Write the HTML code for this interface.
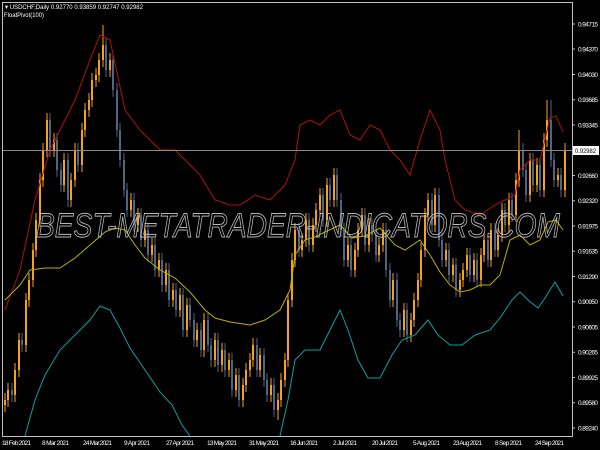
<!DOCTYPE html>
<html><head><meta charset="utf-8"><style>
html,body{margin:0;padding:0;background:#000;width:600px;height:450px;overflow:hidden}
svg{display:block}
text{font-family:"Liberation Sans",sans-serif}
</style></head><body>
<svg width="600" height="450" xmlns="http://www.w3.org/2000/svg">
<rect width="600" height="450" fill="#000"/>
<g fill="none">
<path stroke="#f5a21a" stroke-width="1" d="M5 393V412M8 383V407M15 363V402M19 333V377M26 293V352M29 273V307M33 243V287M36 213V257M40 173V227M43 143V187M47 113V157M54 133V157M64 153V192M71 173V207M75 143V187M82 123V172M85 103V137M89 93V117M92 73V107M96 68V87M99 53V82M103 25V67M110 53V77M131 193V217M138 208V232M145 223V247M152 238V262M159 253V277M166 263V292M173 283V307M180 288V317M187 298V337M197 323V347M204 313V357M215 333V367M222 343V372M229 353V377M236 368V397M243 378V407M246 363V392M250 353V377M253 338V367M260 348V377M271 378V402M278 393V420M281 373V407M285 353V387M288 293V367M292 253V307M295 223V267M302 233V257M306 213V247M313 218V252M316 203V232M320 188V217M327 178V227M334 168V207M348 238V267M355 243V277M358 223V257M362 208V237M369 218V252M379 238V262M383 223V252M393 273V307M404 303V337M411 313V342M414 293V327M418 273V307M421 243V287M425 208V257M428 193V222M435 188V232M446 243V267M453 258V282M460 273V297M463 263V287M467 248V277M474 253V282M481 248V287M484 233V262M491 223V267M498 228V257M502 203V242M509 193V232M516 173V222M519 130V187M530 153V202M537 158V192M544 133V197M547 100V147M558 168V187M565 143V197"/>
<path stroke="#f5a21a" stroke-width="2" d="M5 400V405M8 390V400M15 370V395M19 340V370M26 300V345M29 280V300M33 250V280M36 220V250M40 180V220M43 150V180M47 120V150M54 140V150M64 160V185M71 180V200M75 150V180M82 130V165M85 110V130M89 100V110M92 80V100M96 75V80M99 60V75M103 45V60M110 60V70M131 200V210M138 215V225M145 230V240M152 245V255M159 260V270M166 270V285M173 290V300M180 295V310M187 305V330M197 330V340M204 320V350M215 340V360M222 350V365M229 360V370M236 375V390M243 385V400M246 370V385M250 360V370M253 345V360M260 355V370M271 385V395M278 400V410M281 380V400M285 360V380M288 300V360M292 260V300M295 230V260M302 240V250M306 220V240M313 225V245M316 210V225M320 195V210M327 185V220M334 175V200M348 245V260M355 250V270M358 230V250M362 215V230M369 225V245M379 245V255M383 230V245M393 280V300M404 310V330M411 320V335M414 300V320M418 280V300M421 250V280M425 215V250M428 200V215M435 195V225M446 250V260M453 265V275M460 280V290M463 270V280M467 255V270M474 260V275M481 255V280M484 240V255M491 230V260M498 235V250M502 210V235M509 200V225M516 180V215M519 150V180M530 160V195M537 165V185M544 140V190M547 120V140M558 175V180M565 150V190"/>
<path stroke="#4f6584" stroke-width="1" d="M12 383V402M22 333V352M50 113V157M57 133V177M61 163V192M68 153V207M78 143V172M106 38V77M113 53V97M117 83V137M120 123V167M124 153V197M127 183V217M134 193V232M141 208V247M148 223V262M155 238V277M162 253V292M169 263V307M176 283V317M183 288V337M190 298V327M194 313V347M201 323V357M208 313V352M211 338V367M218 333V372M225 343V377M232 353V397M239 368V407M257 338V377M264 348V387M267 373V402M274 378V417M299 223V257M309 213V252M323 188V227M330 178V207M337 168V207M341 193V237M344 223V267M351 238V277M365 208V252M372 218V242M376 228V262M386 223V277M390 263V307M397 273V327M400 313V337M407 303V342M432 193V232M439 188V247M442 233V267M449 243V282M456 258V297M470 248V282M477 253V287M488 233V267M495 223V257M505 203V232M512 193V222M523 143V177M526 163V202M533 153V192M540 158V197M551 100V167M554 153V187M561 168V197"/>
<path stroke="#4f6584" stroke-width="2" d="M12 390V395M22 340V345M50 120V150M57 140V170M61 170V185M68 160V200M78 150V165M106 45V70M113 60V90M117 90V130M120 130V160M124 160V190M127 190V210M134 200V225M141 215V240M148 230V255M155 245V270M162 260V285M169 270V300M176 290V310M183 295V330M190 305V320M194 320V340M201 330V350M208 320V345M211 345V360M218 340V365M225 350V370M232 360V390M239 375V400M257 345V370M264 355V380M267 380V395M274 385V410M299 230V250M309 220V245M323 195V220M330 185V200M337 175V200M341 200V230M344 230V260M351 245V270M365 215V245M372 225V235M376 235V255M386 230V270M390 270V300M397 280V320M400 320V330M407 310V335M432 200V225M439 195V240M442 240V260M449 250V275M456 265V290M470 255V275M477 260V280M488 240V260M495 230V250M505 210V225M512 200V215M523 150V170M526 170V195M533 160V185M540 165V190M551 120V160M554 160V180M561 175V190"/>
</g>
<polyline fill="none" stroke="#b01010" stroke-width="1" points="5,310 20,270 35,200 50,150 60,130 75,100 90,60 100,35 110,40 125,110 140,130 150,140 160,150 175,150 190,165 200,175 215,200 230,205 240,205 255,195 270,200 285,185 295,160 300,125 310,120 320,125 330,115 340,110 350,135 360,140 370,125 380,130 390,150 400,160 410,175 420,140 430,110 440,130 445,160 455,200 465,210 480,215 495,205 505,200 515,195 520,170 530,160 540,160 550,118 556,116 563,132"/>
<polyline fill="none" stroke="#b8b000" stroke-width="1" points="5,300 20,285 30,270 45,268 60,268 75,258 90,245 105,232 115,228 125,230 135,245 145,258 160,270 175,278 190,292 205,310 215,318 230,322 250,325 265,320 280,310 290,290 295,255 305,240 315,237 325,232 340,225 352,238 365,236 380,228 395,245 405,250 420,240 430,255 440,272 450,285 460,292 470,290 480,285 490,285 500,275 510,240 520,235 530,245 540,240 548,222 556,220 563,230"/>
<polyline fill="none" stroke="#10a0a0" stroke-width="1" points="25,436 35,400 45,375 60,350 75,335 90,320 100,306 110,310 120,328 130,348 145,370 160,392 172,405 182,425 190,436"/>
<polyline fill="none" stroke="#10a0a0" stroke-width="1" points="280,436 288,400 295,360 305,350 320,350 330,330 340,310 348,330 358,360 368,378 380,378 392,355 402,340 415,335 428,320 438,335 450,345 462,345 475,335 490,330 500,318 512,300 520,292 528,300 538,308 545,298 555,282 563,296"/>
<line x1="2" y1="150.5" x2="572" y2="150.5" stroke="#8a8a8a" stroke-width="1"/>
<text x="36" y="237" font-size="34" font-style="italic" fill="none" stroke="#b8b8b8" stroke-width="0.9" textLength="524" lengthAdjust="spacingAndGlyphs">BEST-METATRADER-INDICATORS.COM</text>
<rect x="2.5" y="2.5" width="570" height="434" fill="none" stroke="#c0c0c0" stroke-width="1"/>
<text x="5" y="9" font-size="6.5" fill="#fff" textLength="138" lengthAdjust="spacingAndGlyphs">▾ USDCHF,Daily  0.92770 0.93859 0.92747 0.92982</text>
<text x="4" y="17" font-size="6.5" fill="#fff" textLength="40" lengthAdjust="spacingAndGlyphs">FloatPivot(100)</text>
<g stroke="#c0c0c0"><path d="M572 24h3M572 49h3M572 74.5h3M572 99.75h3M572 125h3M572 175.5h3M572 200.75h3M572 226h3M572 251.25h3M572 276.5h3M572 301.75h3M572 327h3M572 352.25h3M572 377.5h3M572 402.75h3M572 428h3"/></g>
<g font-size="6.5" fill="#fff" lengthAdjust="spacingAndGlyphs">
<text x="578" y="26.5" textLength="20">0.94715</text><text x="578" y="51.5" textLength="20">0.94370</text><text x="578" y="77" textLength="20">0.94030</text><text x="578" y="102" textLength="20">0.93685</text><text x="578" y="127.5" textLength="20">0.93345</text><text x="578" y="178" textLength="20">0.92660</text><text x="578" y="203" textLength="20">0.92320</text><text x="578" y="228.5" textLength="20">0.91975</text><text x="578" y="253.5" textLength="20">0.91635</text><text x="578" y="279" textLength="20">0.91290</text><text x="578" y="304" textLength="20">0.90950</text><text x="578" y="329.5" textLength="20">0.90605</text><text x="578" y="354.5" textLength="20">0.90265</text><text x="578" y="380" textLength="20">0.89925</text><text x="578" y="405" textLength="20">0.89580</text><text x="578" y="430.5" textLength="20">0.89240</text>
</g>
<rect x="573" y="146" width="26" height="9" fill="#fff"/>
<text x="575" y="153" font-size="6.5" fill="#000" textLength="21" lengthAdjust="spacingAndGlyphs">0.92982</text>
<g font-size="6.5" fill="#fff" lengthAdjust="spacingAndGlyphs">
<text x="2" y="445" textLength="29">18 Feb 2021</text><text x="42" y="445" textLength="27">8 Mar 2021</text><text x="83" y="445" textLength="29">24 Mar 2021</text><text x="124" y="445" textLength="26">9 Apr 2021</text><text x="166" y="445" textLength="28">27 Apr 2021</text><text x="207" y="445" textLength="30">13 May 2021</text><text x="249" y="445" textLength="30">31 May 2021</text><text x="290" y="445" textLength="28">16 Jun 2021</text><text x="333" y="445" textLength="24">2 Jul 2021</text><text x="372" y="445" textLength="26">20 Jul 2021</text><text x="413" y="445" textLength="27">5 Aug 2021</text><text x="453" y="445" textLength="29">23 Aug 2021</text><text x="495" y="445" textLength="27">8 Sep 2021</text><text x="535" y="445" textLength="29">24 Sep 2021</text>
</g>
</svg>
</body></html>
